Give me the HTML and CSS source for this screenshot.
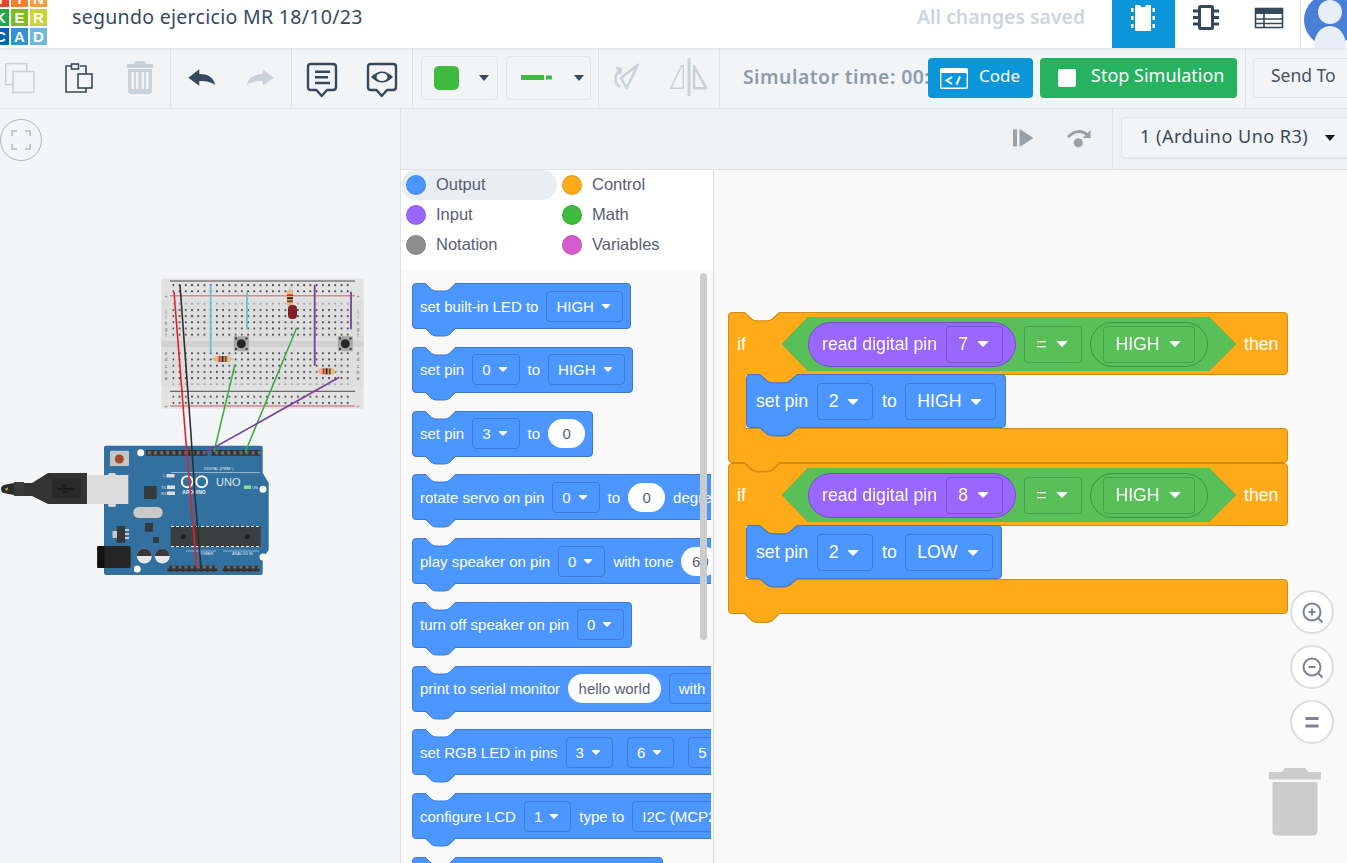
FILE: index.html
```html
<!DOCTYPE html>
<html lang="en">
<head>
<meta charset="utf-8">
<title>segundo ejercicio MR 18/10/23</title>
<link rel="stylesheet" href="styles.css">
</head>
<body>
<svg class="defs" width="0" height="0" aria-hidden="true">
  <symbol id="v" viewBox="0 0 32 9" preserveAspectRatio="none"><path d="M0 0L7 6.5Q9 8 12 8H20Q23 8 25 6.5L32 0"/></symbol>
</svg>
<div class="app">
  <header class="header">
    <div class="logo">
      <b class="t1">T</b><b class="t2">I</b><b class="t3">N</b>
      <b class="t4">K</b><b class="t5">E</b><b class="t6">R</b>
      <b class="t7">C</b><b class="t8">A</b><b class="t9">D</b>
    </div>
    <div class="title">segundo ejercicio MR 18/10/23</div>
    <div class="saved">All changes saved</div>
    <div class="tab active">
      <svg width="32" height="30" viewBox="0 0 32 30"><path class="w" d="M9 1H13L14 3H18L19 1H23Q24 1 24 2V26Q24 27 23 27H9Q8 27 8 26V2Q8 1 9 1Z"/><path class="w" d="M4 4H6.5V8H4ZM4 12H6.5V16H4ZM4 20H6.5V24H4ZM25.500 4H28V8H25.500ZM25.500 12H28V16H25.500ZM25.500 20H28V24H25.500Z"/></svg>
    </div>
    <div class="tab">
      <svg width="32" height="30" viewBox="0 0 32 30"><rect class="dk-line" x="9.500" y="2.500" width="13" height="22" rx="1"/><path class="dk-line" d="M3 7H9M3 13.500H9M3 20H9M23 7H29M23 13.500H29M23 20H29"/></svg>
    </div>
    <div class="tab">
      <svg width="30" height="30" viewBox="0 -2 30 30"><rect class="dk-thin" x="1.500" y="2.500" width="27" height="19"/><rect class="dk" x="1" y="2" width="28" height="6"/><path class="dk-thin" d="M1 13H29M1 17.500H29M10 8V22"/></svg>
    </div>
    <div class="avatar">
      <svg width="46" height="48" viewBox="0 0 46 48"><circle class="av-bg" cx="29" cy="20" r="26"/><circle class="av-fg" cx="29" cy="12" r="12"/><ellipse class="av-fg" cx="29" cy="46" rx="16" ry="20"/></svg>
    </div>
  </header>

  <div class="toolbar">
    <div class="tgroup g1">
      <svg class="ico" width="30" height="30"><rect class="lt-line" x=".7" y=".7" width="21" height="21"/><rect class="lt-line fill-tb" x="8" y="8.500" width="21" height="21"/></svg>
      <svg class="ico" width="30" height="30"><path class="dk-thin" d="M6 3H1V29H21V3H15"/><rect class="dk-thin fill-tb" x="6.500" y="1" width="7" height="5"/><rect class="dk-thin fill-tb" x="13" y="11" width="14" height="14"/></svg>
      <svg class="ico" width="30" height="30"><path class="lt" d="M9 1Q9-2 12-2H18Q21-2 21 1H28.300V5H1.700V1Z"/><path class="lt" d="M3 6H27V28Q27 31 24 31H6Q3 31 3 28ZM6.500 9V26H9V9ZM11 9V26H13.500V9ZM16.500 9V26H19V9ZM21 9V26H23.500V9Z" fill-rule="evenodd"/></svg>
    </div>
    <div class="tgroup g2">
      <svg class="ico" width="30" height="30"><path class="dk" d="M1.300 14.700L12.300 6.300V11C20 11 27 14 28 22C24 19 20 18 12.300 18V22.700Z"/></svg>
      <svg class="ico" width="30" height="30"><path class="lt" d="M28.700 14.700L17.700 6.300V11C10 11 3 14 2 22C6 19 10 18 17.700 18V22.700Z"/></svg>
    </div>
    <div class="tgroup g3">
      <svg class="ico" width="30" height="34"><path class="dk-thin2" d="M4 1H26Q29 1 29 4V24Q29 27 26 27H20L14.700 33L9.500 27H4Q1 27 1 24V4Q1 1 4 1Z"/><path class="dk-thin2" d="M8 8.700H23M8 14.300H21M8 20H23"/></svg>
      <svg class="ico" width="30" height="34"><path class="dk-thin2" d="M4 1H26Q29 1 29 4V24Q29 27 26 27H20L14.700 33L9.500 27H4Q1 27 1 24V4Q1 1 4 1Z"/><path class="dk" d="M4 14Q15 3 26 14Q15 25 4 14Z"/><ellipse class="fill-tb" cx="15" cy="14" rx="5.500" ry="4"/></svg>
    </div>
    <div class="tgroup g4">
      <div class="picker p-color"><span class="swatch"></span><i class="caret-dk"></i></div>
      <div class="picker p-wire">
        <svg width="32" height="6" viewBox="0 0 32 6"><path class="wire" d="M0 0H23V5H0ZM25 .500H31V4.500H25Z"/></svg>
        <i class="caret-dk"></i>
      </div>
    </div>
    <div class="tgroup g5">
      <svg class="ico" width="30" height="34"><path class="lt-line2" d="M26 3.700L9 17L14.700 27Z"/><path class="lt-line2" d="M8 26C2 22 2 14 8 9M4 7L9 8L8 13"/></svg>
      <svg class="ico" width="40" height="40"><path class="lt" d="M18.500 0H21.500V38H18.500Z"/><path class="lt-line" d="M12.700 7.700L1.700 30.300H14.300V7.700Z"/><path class="lt-line2" d="M25 8V30.300H37.300Z"/></svg>
    </div>
    <div class="simtime">Simulator time: 00:</div>
    <div class="btn btn-code">
      <svg width="28" height="21" viewBox="0 0 28 21"><rect class="w-line" x=".7" y=".7" width="26.600" height="19.600" rx="1"/><path class="w" d="M1 1H27V5H1Z"/><path class="w-line2" d="M12 9L6.500 12.500L12 16M20 8.500L16.500 16.500"/></svg>
      <span class="btn-label">Code</span>
    </div>
    <div class="btn btn-stop"><span class="stop-sq"></span><span class="btn-label">Stop Simulation</span></div>
    <div class="send-wrap"><div class="send">Send To</div></div>
  </div>

  <main class="main">
    <section class="canvas">
      <button class="fit" type="button" aria-label="Fit">
        <svg width="20" height="20" viewBox="0 0 20 20"><path class="fit-ico" d="M1 6V1H6M14 1H19V6M19 14V19H14M6 19H1V14"/></svg>
      </button>
      <svg class="circuit" width="400" height="754" viewBox="0 109 400 754">
        <defs>
          <pattern id="holes" x="172.400" y="4.200" width="6.230" height="6.200" patternUnits="userSpaceOnUse"><rect x="0" y="1" width="1.800" height="1.800" fill="#444"/></pattern>
          <pattern id="pale" x="172.400" y="4.200" width="6.230" height="6.200" patternUnits="userSpaceOnUse"><rect x="0" y="1" width="1.800" height="1.800" fill="#a5a5a5"/></pattern>
          <pattern id="pins" x="0" y="0" width="6.100" height="6" patternUnits="userSpaceOnUse"><rect x="1.500" y="1" width="3" height="3.500" fill="#6e6e6e"/></pattern>
          <g id="resistor">
            <path d="M-11 0H11" stroke="#aaa" stroke-width="1"/>
            <rect x="-8.500" y="-3" width="17" height="6" rx="3" fill="#e0bd80"/>
            <rect x="-4" y="-3" width="1.800" height="6" fill="#e8211c"/>
            <rect x="-1" y="-3" width="1.800" height="6" fill="#1c1c1c"/>
            <rect x="2" y="-3" width="2" height="6" fill="#7a4a1c"/>
          </g>
          <g id="pushbtn">
            <rect x="-7.500" y="-7.500" width="15" height="15" fill="#a9a9a9"/>
            <circle r="4.500" fill="#262626"/>
            <circle cx="-5.200" cy="-5.200" r="1.200" fill="#444"/><circle cx="5.200" cy="-5.200" r="1.200" fill="#444"/><circle cx="-5.200" cy="5.200" r="1.200" fill="#444"/><circle cx="5.200" cy="5.200" r="1.200" fill="#444"/>
          </g>
        </defs>
        <!-- breadboard -->
        <rect x="161.300" y="278.700" width="202.400" height="130" rx="1" fill="#e2e2e2"/>
        <rect x="161.300" y="300" width="202.400" height="86" fill="#dedede"/>
        <rect x="161.300" y="341" width="202.400" height="6" fill="#d2d2d2"/>
        <path d="M170 281H355M170 391.300H355" stroke="#3c3c3c" stroke-width=".9"/>
        <path d="M170 295.700H355M170 406H355" stroke="#cf8a8a" stroke-width="1.400"/>
        <rect x="172.400" y="284" width="180" height="9" fill="url(#holes)"/>
        <rect x="172.400" y="302" width="180" height="3" fill="url(#pale)"/>
        <rect x="172.400" y="309" width="180" height="30" fill="url(#holes)"/>
        <rect x="172.400" y="351" width="180" height="30" fill="url(#holes)"/>
        <rect x="172.400" y="383" width="180" height="3" fill="url(#pale)"/>
        <rect x="172.400" y="394.400" width="180" height="11" fill="url(#holes)"/>
        <g class="bb-l">
          <text x="166" y="298">+</text><text x="166" y="408">+</text>
          <text x="358" y="298">+</text><text x="358" y="408">+</text>
          <text x="166" y="313">j</text><text x="166" y="319">i</text><text x="166" y="325">h</text><text x="166" y="331">g</text><text x="166" y="337">f</text>
          <text x="166" y="355">e</text><text x="166" y="361">d</text><text x="166" y="368">c</text><text x="166" y="374">b</text><text x="166" y="380">a</text>
          <text x="358" y="313">j</text><text x="358" y="319">i</text><text x="358" y="325">h</text><text x="358" y="331">g</text><text x="358" y="337">f</text>
          <text x="358" y="355">e</text><text x="358" y="361">d</text><text x="358" y="368">c</text><text x="358" y="374">b</text><text x="358" y="380">a</text>
        </g>
        <use href="#pushbtn" x="241.300" y="343.700"/>
        <use href="#pushbtn" x="345.300" y="343.700"/>
        <path d="M210.700 284.700V353.300M247 291.700V329.300" stroke="#6cc0cf" stroke-width="1.800"/>
        <path d="M314.700 284.700V365.700M351 291.700V329.300" stroke="#7b3fa0" stroke-width="1.800"/>
        <use href="#resistor" x="222.700" y="359"/>
        <use href="#resistor" x="326.700" y="371.300"/>
        <use href="#resistor" transform="translate(290 298.300) rotate(90)"/>
        <rect x="288" y="305" width="9" height="14" rx="4" fill="#7f1f22"/>

        <!-- usb cable -->
        <path d="M1 489Q1 485 6 484.500L14 483V495L6 493.500Q1 493 1 489Z" fill="#2d2d2d"/>
        <path d="M14 482H24V496H14Z" fill="#3a3a3a"/>
        <path d="M24 483H32L48 473H87V504H48L32 496H24Z" fill="#333"/>
        <path d="M5 489L8 487.500L7 491Z" fill="#e8c530"/>
        <rect x="52" y="479" width="29" height="19" fill="#2a2a2a"/>
        <path d="M57 489H75M62 486H66M62 492H68" stroke="#111" stroke-width="1"/>
        <!-- board -->
        <path d="M106 445.700H260.700Q262.700 445.700 262.700 447.700V473L268.700 483V550L262.700 558V573Q262.700 575 260.700 575H106Q104 575 104 573V447.700Q104 445.700 106 445.700Z" fill="#32709f"/>
        <rect x="108" y="473" width="8" height="4" rx="2" fill="#d8d8d8"/>
        <rect x="108" y="503" width="8" height="4" rx="2" fill="#d8d8d8"/>
        <rect x="87.300" y="475" width="41" height="29" fill="#dcdcdc"/>
        <rect x="97.300" y="546" width="33.400" height="22" rx="2" fill="#262626"/>
        <rect x="97.300" y="546" width="7" height="22" fill="#111"/>
        <rect x="110" y="450.700" width="19" height="15.300" rx="1" fill="#c4c6c8"/>
        <circle cx="119.300" cy="459" r="4.500" fill="#a8482a"/>
        <rect x="146" y="450" width="61.300" height="5.700" fill="#333"/>
        <rect x="210.700" y="450" width="49.300" height="5.700" fill="#333"/>
        <rect x="146" y="450" width="61.300" height="5.700" fill="url(#pins)"/>
        <rect x="210.700" y="450" width="49.300" height="5.700" fill="url(#pins)"/>
        <rect x="167.300" y="565.700" width="50" height="6" fill="#333"/>
        <rect x="222.700" y="565.700" width="36.600" height="6" fill="#333"/>
        <rect x="167.300" y="565.700" width="50" height="6" fill="url(#pins)"/>
        <rect x="222.700" y="565.700" width="36.600" height="6" fill="url(#pins)"/>
        <circle cx="140.700" cy="452.700" r="3.500" fill="#fdfcf0"/>
        <circle cx="263" cy="489.300" r="3.500" fill="#fdfcf0"/>
        <circle cx="263" cy="557" r="3.500" fill="#fdfcf0"/>
        <circle cx="137.300" cy="569" r="3.500" fill="#fdfcf0"/>
        <rect x="144" y="486" width="12.700" height="13" fill="#343a3f"/>
        <rect x="133.300" y="507" width="29.400" height="11" rx="5.500" fill="#c9c9c9"/>
        <rect x="116.700" y="526" width="8.500" height="16.700" fill="#33383c"/>
        <rect x="112.500" y="531" width="4.500" height="7" fill="#c9c9c9"/>
        <rect x="125" y="529" width="4" height="2" fill="#c9c9c9"/><rect x="125" y="533" width="4" height="2" fill="#c9c9c9"/><rect x="125" y="537" width="4" height="2" fill="#c9c9c9"/>
        <rect x="145" y="523" width="8" height="8.700" fill="#343a3f"/>
        <rect x="153" y="537" width="6" height="6" fill="#343a3f"/>
        <circle cx="144.300" cy="556" r="7.500" fill="#e8e8e8"/>
        <path d="M136.800 556A7.500 7.500 0 0 1 151.800 556Z" fill="#3a3a3a"/>
        <circle cx="162.300" cy="556" r="7.500" fill="#e8e8e8"/>
        <path d="M154.800 556A7.500 7.500 0 0 1 169.800 556Z" fill="#3a3a3a"/>
        <rect x="170.700" y="526" width="90" height="21" fill="#3b3e41"/>
        <path d="M171 526.500H260M171 546.500H260" stroke="#eee" stroke-width="1" stroke-dasharray="3 2"/>
        <circle cx="183.300" cy="536.700" r="2.500" fill="#1e1e1e"/>
        <circle cx="247.300" cy="536.700" r="2.500" fill="#1e1e1e"/>
        <circle cx="187.300" cy="481.700" r="5.500" fill="none" stroke="#f2f2f2" stroke-width="2"/>
        <circle cx="201.700" cy="481.700" r="5.500" fill="none" stroke="#f2f2f2" stroke-width="2"/>
        <text class="ard-b" x="194" y="494" text-anchor="middle">ARDUINO</text>
        <text class="ard-uno" x="216" y="486">UNO</text>
        <text class="ard-s" x="204" y="470">DIGITAL (PWM~)</text>
        <text class="ard-s" x="199" y="555">POWER</text>
        <text class="ard-s" x="232" y="555">ANALOG IN</text>
        <text class="ard-s" x="163" y="477">L</text>
        <text class="ard-s" x="161" y="489">TX</text>
        <text class="ard-s" x="161" y="495">RX</text>
        <path d="M171 472.500H260M186 551H216M223 551H259" stroke="#d8e4ee" stroke-width=".6"/>
        <rect x="166.500" y="474" width="8" height="3.500" fill="#ddd"/>
        <rect x="167" y="485.500" width="8" height="3.500" fill="#ddd"/>
        <rect x="167" y="491.500" width="8" height="3.500" fill="#ddd"/>
        <rect x="244" y="485.500" width="7" height="3.500" fill="#8ee08e"/>
        <text class="ard-s" x="252" y="489">ON</text>
        <!-- jumper wires -->
        <path d="M235 364.300L214 451.700M296.700 327.700L245 452.700" stroke="#3cb043" stroke-width="1.600" fill="none"/>
        <path d="M339.300 377.300L204 453.300" stroke="#7b3fa0" stroke-width="1.600" fill="none"/>
        <path d="M180 285L190.700 430L195 497L201 568" stroke="#2f2f2f" stroke-width="1.600" fill="none"/>
        <path d="M174 291.700L185 430L196.700 568" stroke="#e5202a" stroke-width="1.600" fill="none"/>
      </svg>
    </section>

    <section class="code">
      <div class="codebar">
        <svg class="cb-ico" width="22" height="20" viewBox="0 0 22 20"><path class="grey" d="M1 1.500H5V18.500H1ZM7.500 1L21.500 10L7.500 19Z"/></svg>
        <svg class="cb-ico2" width="26" height="20" viewBox="0 0 26 20"><path class="grey-line" d="M2 9Q12-1 22 7"/><path class="grey" d="M24.500 2V10H16.500Z"/><circle class="grey" cx="12.300" cy="14.700" r="4.500"/></svg>
        <div class="cb-sep"></div>
        <div class="cb-select"><span class="cb-label">1 (Arduino Uno R3)</span><i class="caret-bk"></i></div>
      </div>
      <div class="code-body">
        <aside class="palette">
          <div class="cats">
            <div class="cat selected"><span class="dot c-out"></span>Output</div>
            <div class="cat"><span class="dot c-ctl"></span>Control</div>
            <div class="cat"><span class="dot c-inp"></span>Input</div>
            <div class="cat"><span class="dot c-mat"></span>Math</div>
            <div class="cat"><span class="dot c-not"></span>Notation</div>
            <div class="cat"><span class="dot c-var"></span>Variables</div>
          </div>
          <div class="pal-list">
            <div class="pal-clip">
              <div class="blk"><svg class="notch"><use href="#v"/></svg>set built-in LED to<span class="dd">HIGH<i class="caret"></i></span><svg class="tab-v"><use href="#v"/></svg></div>
              <div class="blk"><svg class="notch"><use href="#v"/></svg>set pin<span class="dd">0<i class="caret"></i></span>to<span class="dd">HIGH<i class="caret"></i></span><svg class="tab-v"><use href="#v"/></svg></div>
              <div class="blk"><svg class="notch"><use href="#v"/></svg>set pin<span class="dd">3<i class="caret"></i></span>to<span class="inp">0</span><svg class="tab-v"><use href="#v"/></svg></div>
              <div class="blk"><svg class="notch"><use href="#v"/></svg>rotate servo on pin<span class="dd">0<i class="caret"></i></span>to<span class="inp">0</span>degrees<svg class="tab-v"><use href="#v"/></svg></div>
              <div class="blk"><svg class="notch"><use href="#v"/></svg>play speaker on pin<span class="dd">0<i class="caret"></i></span>with tone<span class="inp">60</span><svg class="tab-v"><use href="#v"/></svg></div>
              <div class="blk"><svg class="notch"><use href="#v"/></svg>turn off speaker on pin<span class="dd">0<i class="caret"></i></span><svg class="tab-v"><use href="#v"/></svg></div>
              <div class="blk"><svg class="notch"><use href="#v"/></svg>print to serial monitor<span class="inp wide">hello world</span><span class="dd">with<i class="caret"></i></span><svg class="tab-v"><use href="#v"/></svg></div>
              <div class="blk"><svg class="notch"><use href="#v"/></svg>set RGB LED in pins<span class="dd">3<i class="caret"></i></span><span class="dd sp">6<i class="caret"></i></span><span class="dd sp">5<i class="caret"></i></span><svg class="tab-v"><use href="#v"/></svg></div>
              <div class="blk"><svg class="notch"><use href="#v"/></svg>configure LCD<span class="dd">1<i class="caret"></i></span>type to<span class="dd">I2C (MCP23008)<i class="caret"></i></span><svg class="tab-v"><use href="#v"/></svg></div>
              <div class="blk blk-last"><svg class="notch"><use href="#v"/></svg></div>
            </div>
            <div class="pal-scroll"></div>
          </div>
        </aside>
        <div class="workspace">
          <div class="stack">
            <div class="ifb">
              <div class="if-head">
                <svg class="notch"><use href="#v"/></svg>
                <span class="if-t">if</span>
                <div class="hexwrap"><div class="hex">
                  <div class="pill-r">read digital pin<span class="dd">7<i class="caret"></i></span></div>
                  <span class="dd eq">=<i class="caret"></i></span>
                  <div class="pill-g"><span class="dd">HIGH<i class="caret"></i></span></div>
                </div></div>
                <span class="then">then</span>
              </div>
              <div class="if-body">
                <div class="arm"></div>
                <div class="blk"><svg class="notch"><use href="#v"/></svg>set pin<span class="dd">2<i class="caret"></i></span>to<span class="dd">HIGH<i class="caret"></i></span><svg class="tab-v"><use href="#v"/></svg></div>
              </div>
              <div class="if-foot"><svg class="tab-v"><use href="#v"/></svg></div>
            </div>
            <div class="ifb">
              <div class="if-head">
                <svg class="notch"><use href="#v"/></svg>
                <span class="if-t">if</span>
                <div class="hexwrap"><div class="hex">
                  <div class="pill-r">read digital pin<span class="dd">8<i class="caret"></i></span></div>
                  <span class="dd eq">=<i class="caret"></i></span>
                  <div class="pill-g"><span class="dd">HIGH<i class="caret"></i></span></div>
                </div></div>
                <span class="then">then</span>
              </div>
              <div class="if-body">
                <div class="arm"></div>
                <div class="blk"><svg class="notch"><use href="#v"/></svg>set pin<span class="dd">2<i class="caret"></i></span>to<span class="dd">LOW<i class="caret"></i></span><svg class="tab-v"><use href="#v"/></svg></div>
              </div>
              <div class="if-foot"><svg class="tab-v"><use href="#v"/></svg></div>
            </div>
          </div>
          <div class="zooms">
            <button class="zbtn" type="button" aria-label="Zoom in"><svg width="26" height="26" viewBox="0 0 26 26"><circle class="z-line" cx="13" cy="13" r="8.500"/><path class="z-line" d="M19 19L23.500 23.500M9.500 13H16.500M13 9.500V16.500"/></svg></button>
            <button class="zbtn" type="button" aria-label="Zoom out"><svg width="26" height="26" viewBox="0 0 26 26"><circle class="z-line" cx="13" cy="13" r="8.500"/><path class="z-line" d="M19 19L23.500 23.500M9.500 13H16.500"/></svg></button>
            <button class="zbtn" type="button" aria-label="Reset"><svg width="26" height="26" viewBox="0 0 26 26"><path class="z-line3" d="M6.500 9.500H19.500M6.500 17H19.500"/></svg></button>
          </div>
          <svg class="bin" width="54" height="70" viewBox="0 0 54 70"><path d="M1 5H14L17 1H37L40 5H53V12.500H1Z"/><path d="M4.500 15H49.500V64Q49.500 68.500 45 68.500H9Q4.500 68.500 4.500 64Z"/></svg>
          <div class="h-scroll"></div>
        </div>
      </div>
    </section>
  </main>
</div>
</body>
</html>
```

FILE: styles.css
```css
* { box-sizing: border-box; }
html, body { margin: 0; padding: 0; height: 100%; overflow: hidden; background: #f4f5f7; }
body { font-family: "Noto Sans", "Liberation Sans", sans-serif; color: #34495e; }
svg { display: block; }
.defs { position: absolute; }
.app { width: 1347px; height: 863px; display: flex; flex-direction: column; overflow: hidden; }

/* header */
.header { height: 48px; flex: none; display: flex; align-items: flex-start; background: #fff; position: relative; z-index: 3; box-shadow: 0 1px 3px rgba(0,0,0,.08); overflow: hidden; }
.logo { margin: -10px 0 0 -8px; display: grid; grid-template-columns: repeat(3, 17px); grid-auto-rows: 17px; gap: 2px; flex: none; }
.logo b { display: flex; align-items: center; justify-content: center; color: #fff; font: 700 15px "Liberation Sans", sans-serif; }
.t1 { background: #e8452c; } .t2 { background: #f5802b; } .t3 { background: #fb9a3c; }
.t4 { background: #1fa84a; } .t5 { background: #7fbd1f; } .t6 { background: #c9d435; }
.t7 { background: #0066b3; } .t8 { background: #2f94d0; } .t9 { background: #6bb9e0; }
.title { margin-left: 25px; font-size: 19.500px; line-height: 34px; color: #34495e; white-space: nowrap; letter-spacing: .3px; }
.saved { margin-left: auto; margin-right: 27px; font-size: 19.400px; line-height: 34px; font-weight: 600; color: #cdd5de; white-space: nowrap; }
.tab { width: 62.670px; height: 48px; padding-top: 4px; display: flex; justify-content: center; flex: none; }
.tab.active { background: #0a96d8; }
.avatar { width: 47px; height: 48px; border-left: 1px solid #e3e6e9; flex: none; overflow: hidden; }
.w { fill: #fff; } .w-line { fill: none; stroke: #fff; stroke-width: 1.4; } .w-line2 { fill: none; stroke: #fff; stroke-width: 2; }
.dk { fill: #34495e; } .dk-line { fill: none; stroke: #34495e; stroke-width: 3; }
.dk-thin { fill: none; stroke: #34495e; stroke-width: 1.6; }
.dk-thin2 { fill: none; stroke: #34495e; stroke-width: 2.400; stroke-linejoin: round; }
.lt { fill: #c9d2db; } .lt-line { fill: none; stroke: #c9d2db; stroke-width: 1.5; } .lt-line2 { fill: none; stroke: #c9d2db; stroke-width: 2.5; stroke-linejoin: round; }
.dk-thin.fill-tb, .lt-line.fill-tb { fill: #f3f4f6; }
.fill-tb { fill: #f3f4f6; }
.av-bg { fill: #4a7fd6; } .av-fg { fill: #e8eef8; }

/* toolbar */
.toolbar { height: 61px; flex: none; display: flex; align-items: center; background: #f3f4f6; border-bottom: 1px solid #dfe3e6; }
.tgroup { height: 60px; display: flex; align-items: center; border-right: 1px solid #dfe3e6; flex: none; }
.ico { overflow: visible; flex: none; }
.g1 { width: 171px; padding-left: 5px; gap: 30px; }
.g2 { width: 121px; padding-left: 16px; gap: 28px; }
.g3 { width: 121px; padding-left: 15px; gap: 30px; padding-top: 4px; }
.g4 { width: 186px; padding-left: 8px; gap: 8px; }
.g5 { width: 121px; padding-left: 13px; gap: 27px; }
.picker { height: 44px; display: flex; align-items: center; border: 1px solid #e1e4e8; border-radius: 4px; padding-left: 12px; position: relative; }
.p-color { width: 77px; gap: 20px; }
.p-wire { width: 85px; gap: 21px; padding-left: 14px; }
.swatch { width: 25px; height: 24px; background: #3ebb3e; border-radius: 5px; }
.wire { fill: #3ebb3e; }
.caret-dk { width: 0; height: 0; border-left: 5px solid transparent; border-right: 5px solid transparent; border-top: 6px solid #34495e; }
.simtime { width: 185px; margin-left: 23px; padding-bottom: 3px; overflow: hidden; white-space: nowrap; font-size: 19.400px; letter-spacing: .45px; font-weight: 600; color: #8c9cae; flex: none; }
.btn { height: 40px; border-radius: 4px; display: flex; align-items: center; color: #fff; font-size: 18px; white-space: nowrap; flex: none; }
.btn-label { padding-bottom: 6px; }
.btn-code { width: 105px; background: #0a96d8; padding-left: 12px; gap: 11px; font-size: 17px; }
.btn-stop { width: 197px; margin-left: 7px; background: #25b35f; padding-left: 18px; gap: 15px; }
.stop-sq { width: 18px; height: 18px; background: #fff; border-radius: 2px; }
.send-wrap { margin-left: 8px; height: 60px; flex: 1; border-left: 1px solid #dfe3e6; padding-left: 7px; display: flex; align-items: center; overflow: hidden; }
.send { width: 110px; height: 40px; flex: none; border: 1px solid #e3e6e9; border-radius: 4px; padding: 0 0 6px 17px; display: flex; align-items: center; font-size: 17.500px; color: #47535f; white-space: nowrap; }

/* layout */
.main { flex: 1; min-height: 0; display: grid; grid-template-columns: 400px 1fr; }
.canvas { position: relative; background: #f4f5f7; overflow: hidden; }
.fit { position: absolute; left: 0; top: 10px; width: 42px; height: 42px; border-radius: 50%; border: 1px solid #b5b5b5; background: transparent; padding: 0; display: flex; align-items: center; justify-content: center; }
.fit-ico { fill: none; stroke: #b4b8bd; stroke-width: 1.5; }
.circuit { position: absolute; left: 0; top: 0; }
.bb-l text { font: 4.500px "Liberation Sans", sans-serif; fill: #666; text-anchor: middle; }
.ard-b { font: 700 5px "Liberation Sans", sans-serif; fill: #f2f2f2; }
.ard-uno { font: 11px "Liberation Sans", sans-serif; fill: #dfe8ef; }
.ard-s { font: 3.800px "Liberation Sans", sans-serif; fill: #e4ecf2; }

.code { display: flex; flex-direction: column; min-width: 0; border-left: 1px solid #dfe1e4; background: #f9f9f9; }
.codebar { height: 61px; flex: none; display: flex; align-items: center; padding-bottom: 3px; background: #f0f1f3; border-bottom: 1px solid #e3e4e6; }
.cb-ico { margin-left: 611px; }
.cb-ico2 { margin-left: 32px; }
.grey { fill: #98a0a8; } .grey-line { fill: none; stroke: #98a0a8; stroke-width: 3; }
.cb-sep { width: 1px; height: 60px; margin-bottom: -3px; background: #dfe1e4; margin-left: 20px; }
.cb-select { margin-left: 8px; flex: 1; height: 41px; display: flex; align-items: center; background: #f3f4f6; border: 1px solid #e3e5e8; border-radius: 4px; box-shadow: 0 1px 1px rgba(0,0,0,.05); padding-left: 18px; margin-right: -20px; font-size: 18px; color: #34495e; white-space: nowrap; letter-spacing: .5px; }
.cb-label { padding-bottom: 3px; }
.caret-bk { margin-left: 17px; width: 0; height: 0; border-left: 5.500px solid transparent; border-right: 5.500px solid transparent; border-top: 6px solid #111; }
.code-body { flex: 1; min-height: 0; display: flex; }

/* palette */
.palette { width: 313px; flex: none; display: flex; flex-direction: column; border-right: 1px solid #dddddd; font-family: "Liberation Sans", sans-serif; }
.cats { height: 100px; flex: none; background: #fff; display: grid; grid-template-columns: 156px 1fr; grid-auto-rows: 30px; align-content: start; }
.cat { display: flex; align-items: center; gap: 10px; padding: 0 0 2px 5px; font-size: 16.500px; color: #575e75; }
.cat.selected { background: #e9eef2; border-radius: 15px; }
.dot { width: 20px; height: 20px; margin-top: 2px; border-radius: 50%; flex: none; border: 1px solid rgba(0,0,0,.1); }
.c-out { background: #4c97ff; } .c-ctl { background: #ffab19; } .c-inp { background: #9966ff; }
.c-mat { background: #3ebb3e; } .c-not { background: #8f8f8f; } .c-var { background: #d45ccd; }
.pal-list { flex: 1; min-height: 0; position: relative; background: #f9f9f9; }
.pal-clip { width: 310px; height: 100%; overflow: hidden; padding: 13px 0 0 11px; display: flex; flex-direction: column; align-items: flex-start; gap: 17.780px; }
.pal-scroll { position: absolute; left: 299px; top: 3px; width: 7px; height: 367px; background: #cccccc; border-radius: 4px; }

/* blocks */
.blk { --fill: #4c97ff; --edge: #3d79cc; --notchfill: #f9f9f9; position: relative; height: 46px; flex: none; width: max-content; min-width: 0; display: flex; align-items: center; gap: 8px; padding: 0 7px 0 7px; background: var(--fill); border: 1px solid var(--edge); border-radius: 4px; color: #fff; font: 15px "Liberation Sans", sans-serif; white-space: nowrap; }
.blk-last { width: 251px; }
.notch, .tab-v { position: absolute; left: 12px; width: 31px; height: 9px; overflow: visible; stroke-width: 1; }
.notch { top: -1px; fill: var(--notchfill); stroke: var(--edge); }
.tab-v { top: 100%; fill: var(--fill); stroke: var(--edge); }
.dd { display: inline-flex; align-items: center; justify-content: center; gap: 7px; height: 31px; padding: 0 11px 0 9px; border: 1px solid rgba(0,0,0,.18); border-radius: 4px; font-size: 15px; flex: none; }
.dd.sp { margin-left: 6px; }
.caret { width: 0; height: 0; border-left: 5px solid transparent; border-right: 5px solid transparent; border-top: 5.500px solid #fff; border-radius: 2px; }
.inp { display: inline-flex; align-items: center; justify-content: center; height: 29px; min-width: 37px; padding: 0 10.500px; background: #fff; color: #575e75; border-radius: 15px; font-size: 15px; flex: none; }

/* workspace */
.workspace { flex: 1; min-width: 0; position: relative; background: #f9f9f9; overflow: hidden; font-family: "Liberation Sans", sans-serif; }
.stack { position: absolute; left: 14px; top: 142px; width: 560px; display: flex; flex-direction: column; }
.ifb { --orange: #ffab19; --oedge: #cf8b17; display: flex; flex-direction: column; position: relative; }
.if-head { position: relative; height: 63px; padding-top: 1px; background: var(--orange); border: 1px solid var(--oedge); border-radius: 4px 4px 4px 0; display: flex; align-items: center; color: #fff; font-size: 17.700px; --fill: #ffab19; --edge: #cf8b17; --notchfill: #ffab19; }
.if-head .notch { width: 36px; height: 10px; left: 15px; }
.ifb:first-child .if-head { --notchfill: #f9f9f9; }
.if-t { margin-left: 8px; width: 8px; }
.hexwrap { margin-left: 37px; filter: drop-shadow(0 0 .5px #389438); flex: none; }
.hex { width: 454px; height: 54px; background: #59c059; clip-path: polygon(26px 0, calc(100% - 27px) 0, 100% 50%, calc(100% - 27px) 100%, 26px 100%, 0 50%); display: flex; align-items: center; padding-left: 26px; gap: 8px; }
.then { margin-left: 8px; }
.pill-r { width: 208px; height: 45px; flex: none; background: #9966ff; border: 1px solid #774dcb; border-radius: 23px; display: flex; align-items: center; justify-content: space-between; padding: 0 12px 0 13px; white-space: nowrap; }
.pill-g { height: 45px; width: 118px; flex: none; border: 1px solid #389438; border-radius: 23px; display: flex; align-items: center; justify-content: center; }
.workspace .dd { height: 37px; font-size: 17.700px; gap: 9px; padding: 0 13px 0 11px; }
.workspace .caret { border-left-width: 6px; border-right-width: 6px; border-top-width: 6.500px; }
.workspace .eq { width: 58px; margin-right: 0; }
.if-body { height: 53px; display: flex; align-items: flex-start; position: relative; z-index: 2; }
.arm { width: 18px; margin: -1px 0; height: 55px; background: var(--orange); border-left: 1px solid var(--oedge); flex: none; }
.if-body .blk { height: 54px; margin-top: -1px; gap: 8.500px; padding: 1px 8.600px 0 9px; font-size: 17.700px; --notchfill: #ffab19; }
.if-body .notch, .if-body .tab-v { left: 12px; width: 39px; height: 10px; }
.if-foot { position: relative; height: 35px; background: var(--orange); border: 1px solid var(--oedge); border-radius: 0 4px 4px 4px; --fill: #ffab19; --edge: #cf8b17; }
.if-foot .tab-v { left: 15px; width: 36px; height: 10.500px; }
.ifb:first-child .if-foot { z-index: 1; }
.zooms { position: absolute; left: 576px; top: 420px; display: flex; flex-direction: column; gap: 11px; }
.zbtn { width: 44px; height: 44px; padding: 0; background: #fff; border: 2.500px solid #dddddd; border-radius: 50%; display: flex; align-items: center; justify-content: center; }
.z-line { fill: none; stroke: #7c8098; stroke-width: 2; }
.z-line3 { fill: none; stroke: #7c8098; stroke-width: 2.800; }
.bin { position: absolute; left: 554px; top: 597px; fill: #cccccc; }
.h-scroll { position: absolute; left: 166px; bottom: 0; width: 336px; height: 1px; background: #9a9a9a; }
```
